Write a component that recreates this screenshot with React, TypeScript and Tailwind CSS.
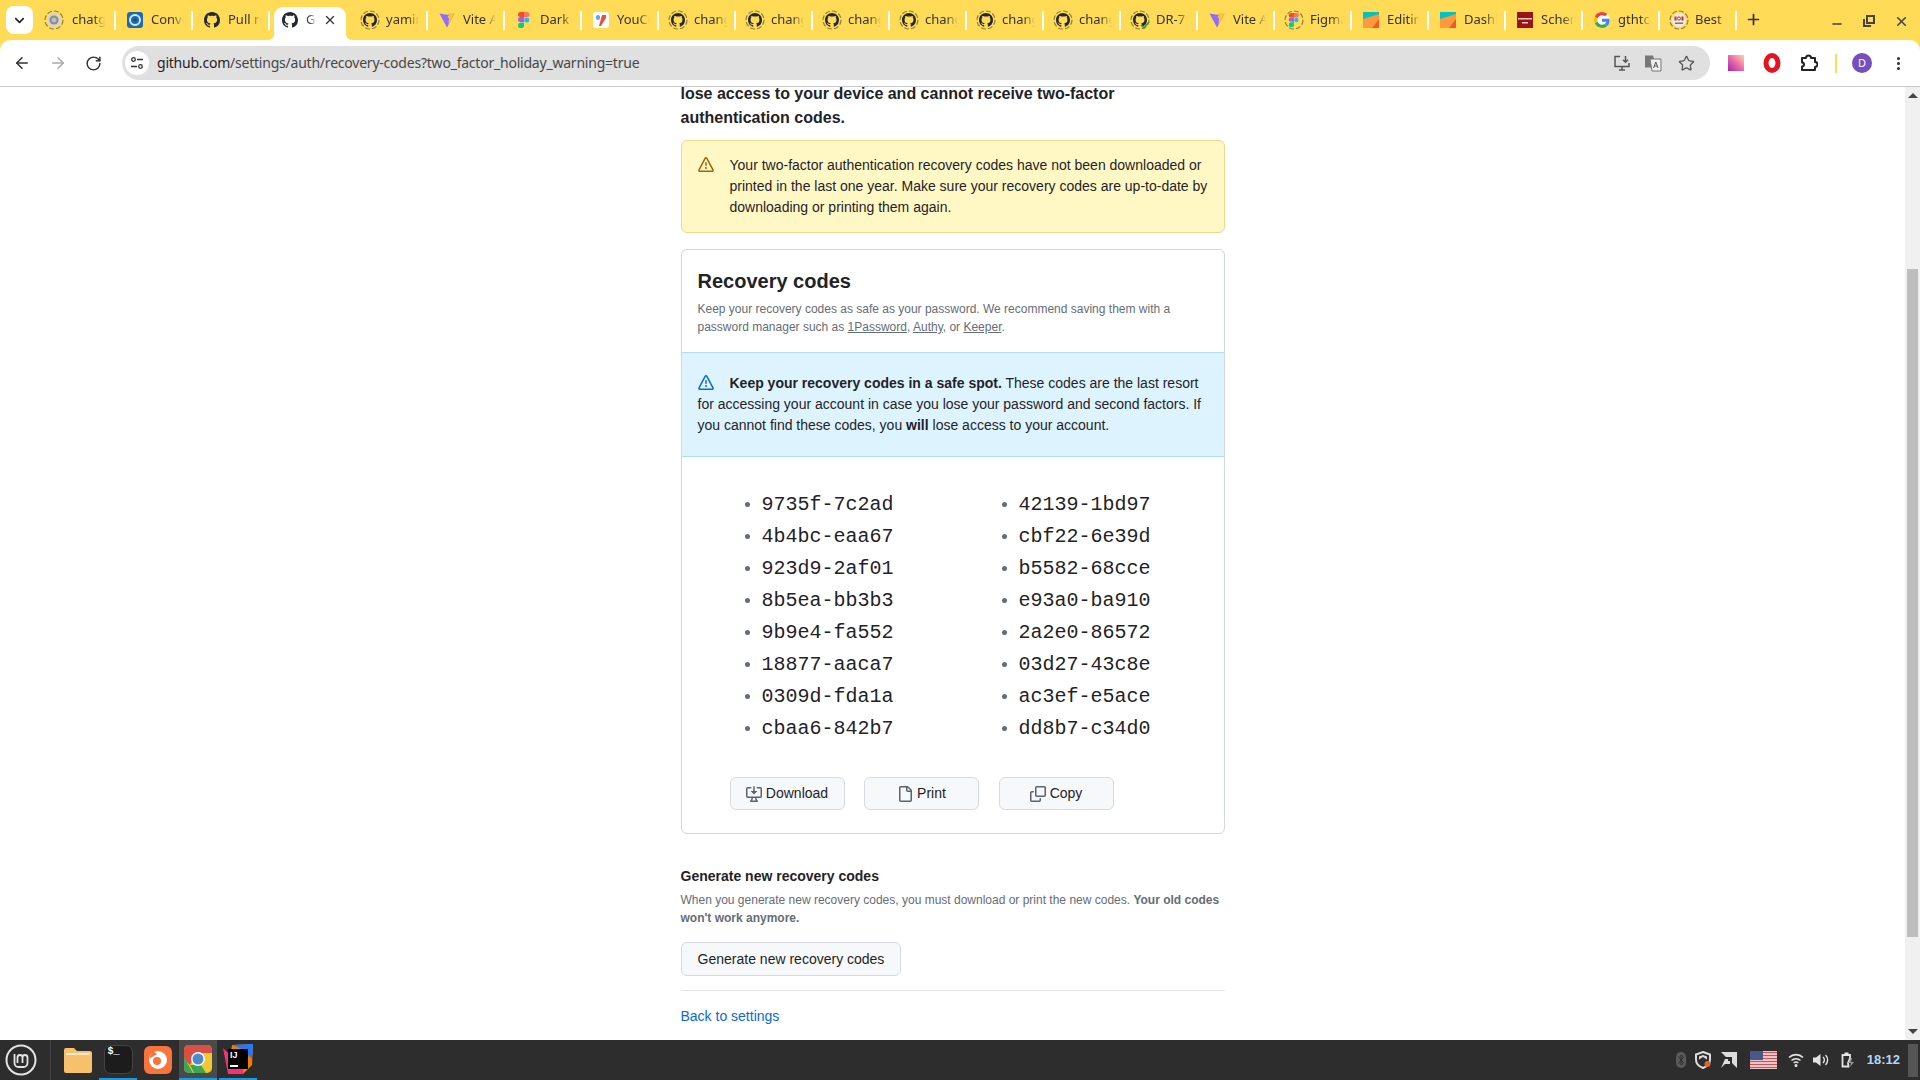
import React from 'react';
import { ArrowLeft, ArrowRight, RotateCw, Star, Plus, X, Minus, EllipsisVertical, ChevronDown } from 'lucide-react';

const ALERT =
  'M6.457 1.047c.659-1.234 2.427-1.234 3.086 0l6.082 11.378A1.75 1.75 0 0 1 14.082 15H1.918a1.75 1.75 0 0 1-1.543-2.575Zm1.763.707a.25.25 0 0 0-.44 0L1.698 13.132a.25.25 0 0 0 .22.368h12.164a.25.25 0 0 0 .22-.368Zm.53 3.996v2.5a.75.75 0 0 1-1.5 0v-2.5a.75.75 0 0 1 1.5 0ZM9 11a1 1 0 1 1-2 0 1 1 0 0 1 2 0Z';
const OCTOCAT =
  'M8 0c4.42 0 8 3.58 8 8a8.013 8.013 0 0 1-5.45 7.59c-.4.08-.55-.17-.55-.38 0-.27.01-1.13.01-2.2 0-.75-.25-1.23-.54-1.48 1.78-.2 3.65-.88 3.65-3.95 0-.88-.31-1.59-.82-2.15.08-.2.36-1.02-.08-2.12 0 0-.67-.22-2.2.82-.64-.18-1.32-.27-2-.27-.68 0-1.36.09-2 .27-1.53-1.03-2.2-.82-2.2-.82-.44 1.1-.16 1.92-.08 2.12-.51.56-.82 1.28-.82 2.15 0 3.06 1.86 3.75 3.64 3.95-.23.2-.44.55-.51 1.07-.46.21-1.61.55-2.33-.66-.15-.24-.6-.83-1.23-.82-.67.01-.27.38.01.53.34.19.73.9.82 1.13.16.45.68 1.31 2.69.94 0 .67.01 1.3.01 1.49 0 .21-.15.45-.55.38A7.995 7.995 0 0 1 0 8c0-4.42 3.58-8 8-8Z';

const Octo = ({ size = 16 }: { size?: number }) => (
  <svg width={size} height={size} viewBox="0 0 16 16" fill="#24292f">
    <path d={OCTOCAT} />
  </svg>
);

const Ring = ({ children }: { children: React.ReactNode }) => (
  <span className="relative flex h-[20px] w-[20px] items-center justify-center">
    <svg className="absolute inset-0" width="20" height="20" viewBox="0 0 20 20" fill="none">
      <circle cx="10" cy="10" r="9" stroke="#8f7f3e" strokeWidth="1.2" strokeDasharray="5 2" />
    </svg>
    {children}
  </span>
);

const Vite = () => (
  <svg width="16" height="16" viewBox="0 0 16 16">
    <path d="M0.5 1.5 L8 2.8 L15.5 1.5 L8 15.5 Z" fill="#8f6bff" />
    <path d="M10.5 0.8 L15.5 1.5 L9.5 12.5 L10 6 L8.5 6 Z" fill="#ffc62a" />
  </svg>
);

const Figma = ({ size = 16 }: { size?: number }) => (
  <svg width={size} height={size} viewBox="0 0 12 16">
    <path d="M2.5 0H6v5H2.500a2.500 2.500 0 0 1 0-5Z" fill="#f24e1e" />
    <path d="M6 0h3a2.500 2.500 0 0 1 0 5H6Z" fill="#ff7262" />
    <path d="M2.500 5H6v5H2.500a2.500 2.500 0 0 1 0-5Z" fill="#a259ff" />
    <circle cx="8.700" cy="8" r="2.500" fill="#1abcfe" />
    <path d="M2.500 10.500H6V13a3 3 0 1 1-3.500-2.500Z" fill="#0acf83" />
  </svg>
);

const Sheet = () => (
  <svg width="16" height="16" viewBox="0 0 16 16">
    <rect width="16" height="16" fill="#00c4c4" />
    <path d="M0 7 L16 2 V16 H0 Z" fill="#ff9a3c" />
    <path d="M9 16 L16 7 V16 Z" fill="#f0592a" />
  </svg>
);

const Conv = () => (
  <svg width="16" height="16" viewBox="0 0 16 16">
    <rect width="16" height="16" rx="3" fill="#1c6bb0" />
    <circle cx="8" cy="8" r="5" fill="none" stroke="#d5e8f6" strokeWidth="2" />
    <circle cx="8" cy="8" r="1.500" fill="#1c4f80" />
  </svg>
);

const You = () => (
  <svg width="16" height="16" viewBox="0 0 16 16">
    <rect width="16" height="16" rx="3" fill="#fff" />
    <rect x="3" y="3" width="4" height="5" rx="2" fill="#5aa7e8" />
    <path d="M9 3h4v3l-5 8H6Z" fill="#e9513f" />
  </svg>
);

const Chat = () => (
  <svg width="14" height="14" viewBox="0 0 14 14">
    <circle cx="7" cy="7" r="7" fill="#d4d4d4" />
    <circle cx="7" cy="7" r="4.500" fill="#8b8b8b" />
    <circle cx="7" cy="7" r="2.500" fill="#bdbdbd" />
  </svg>
);

const Schema = () => (
  <svg width="16" height="16" viewBox="0 0 16 16">
    <rect width="16" height="16" fill="#9c1313" />
    <rect x="1" y="6" width="14" height="1.500" fill="#e9c9c9" />
    <rect x="5" y="10" width="6" height="1.500" fill="#e9c9c9" />
  </svg>
);

const Google = () => (
  <svg width="16" height="16" viewBox="0 0 48 48">
    <circle cx="24" cy="24" r="24" fill="#fff" />
    <path fill="#EA4335" d="M24 9.500c3.500 0 6.700 1.200 9.200 3.600l6.900-6.900C35.900 2.400 30.500 0 24 0 14.600 0 6.500 5.400 2.600 13.200l8 6.200C12.400 13.700 17.700 9.500 24 9.500z" />
    <path fill="#4285F4" d="M47 24.500c0-1.600-.1-3.100-.4-4.500H24v9h13c-.6 3-2.200 5.500-4.800 7.200l7.700 6c4.500-4.200 7.100-10.300 7.100-17.700z" />
    <path fill="#FBBC05" d="M10.500 28.600a14.500 14.500 0 0 1 0-9.200l-8-6.200a24 24 0 0 0 0 21.600z" />
    <path fill="#34A853" d="M24 48c6.500 0 11.900-2.100 15.900-5.800l-7.700-6c-2.200 1.500-4.900 2.300-8.200 2.300-6.300 0-11.600-4.200-13.500-9.900l-8 6.200C6.500 42.600 14.600 48 24 48z" />
  </svg>
);

const Best = () => (
  <svg width="14" height="14" viewBox="0 0 14 14">
    <circle cx="7" cy="7" r="7" fill="#efe9e2" />
    <rect x="2.500" y="3.500" width="2" height="4" fill="#b5342c" />
    <circle cx="7" cy="5.500" r="1.600" fill="none" stroke="#b5342c" />
    <rect x="9.500" y="3.500" width="2" height="4" fill="#b5342c" />
    <rect x="3" y="9.500" width="8" height="1.500" fill="#777" />
  </svg>
);

const Ok = () => (
  <span className="relative flex">
    <Octo size={14} />
    <svg className="absolute -right-[3px] -bottom-[2px]" width="10" height="8" viewBox="0 0 10 8" fill="none">
      <path d="M1 4l3 3 5-6" stroke="#3f9b3f" strokeWidth="1.500" />
    </svg>
  </span>
);

const tabs: { icon: React.ReactNode; label: string; active?: boolean; first?: boolean }[] = [
  { icon: <Ring><Chat /></Ring>, label: 'chatgpt', first: true },
  { icon: <Conv />, label: 'Conversation' },
  { icon: <Octo />, label: 'Pull request' },
  { icon: <Octo />, label: 'GitHub', active: true },
  { icon: <Ring><Octo size={14} /></Ring>, label: 'yamini' },
  { icon: <Vite />, label: 'Vite App' },
  { icon: <Figma />, label: 'Dark Mode' },
  { icon: <You />, label: 'YouCode' },
  { icon: <Ring><Octo size={14} /></Ring>, label: 'changes' },
  { icon: <Ring><Octo size={14} /></Ring>, label: 'changes' },
  { icon: <Ring><Octo size={14} /></Ring>, label: 'changes' },
  { icon: <Ring><Octo size={14} /></Ring>, label: 'changes' },
  { icon: <Ring><Octo size={14} /></Ring>, label: 'changes' },
  { icon: <Ring><Octo size={14} /></Ring>, label: 'changes' },
  { icon: <Ring><Ok /></Ring>, label: 'DR-7' },
  { icon: <Vite />, label: 'Vite App' },
  { icon: <Ring><Figma size={14} /></Ring>, label: 'Figma' },
  { icon: <Sheet />, label: 'Editing' },
  { icon: <Sheet />, label: 'Dashboard' },
  { icon: <Schema />, label: 'Schema' },
  { icon: <Google />, label: 'gthtcp' },
  { icon: <Ring><Best /></Ring>, label: 'Best' },
];

const Tab = ({ icon, label, active, first }: { icon: React.ReactNode; label: string; active?: boolean; first?: boolean }) => {
  if (active) {
    return (
      <div className="relative mt-[7px] mr-[6px] ml-[3px] flex h-[33px] w-[72px] shrink-0 items-center rounded-t-[9px] bg-white pb-[7px] pl-[8px]">
        <span className="absolute -left-[7px] bottom-0 h-[7px] w-[7px] bg-[radial-gradient(circle_at_0_0,transparent_7px,white_7.5px)]" />
        <span className="absolute -right-[7px] bottom-0 h-[7px] w-[7px] bg-[radial-gradient(circle_at_100%_0,transparent_7px,white_7.5px)]" />
        {icon}
        <span className="ml-[8px] w-[10px] overflow-hidden whitespace-nowrap text-[13px] text-[#444] [mask-image:linear-gradient(to_right,black_40%,transparent)]">{label}</span>
        <X size={14} strokeWidth={2.2} className="ml-[7px] text-[#333]" />
      </div>
    );
  }
  if (first) {
    return (
      <div className="flex h-[40px] w-[79px] shrink-0 items-center pr-[1px]">
        <span className="flex w-[30px] shrink-0 items-center justify-center pl-[1px]">{icon}</span>
        <span className="ml-[4px] w-[33px] overflow-hidden whitespace-nowrap text-[13px] text-[#333] [mask-image:linear-gradient(to_right,black_65%,transparent)]">{label}</span>
        <span className="ml-auto h-[19px] w-[2px] bg-white" />
      </div>
    );
  }
  return (
    <div className="flex h-[40px] w-[77px] shrink-0 items-center pr-[1px]">
      <span className="flex w-[34px] shrink-0 items-center justify-center pl-[1px]">{icon}</span>
      <span className="w-[33px] overflow-hidden whitespace-nowrap text-[13px] text-[#333] [mask-image:linear-gradient(to_right,black_65%,transparent)]">{label}</span>
      <span className="ml-auto h-[19px] w-[2px] bg-white" />
    </div>
  );
};

const TabBar = () => (
  <div className="flex h-[40px] shrink-0 items-start bg-[#ffdb58] font-['Noto_Sans',sans-serif]">
    <div className="mt-[6px] ml-[6px] mr-[5px] flex h-[28px] w-[27px] shrink-0 items-center justify-center rounded-[8px] bg-white">
      <ChevronDown size={15} strokeWidth={2.6} className="text-[#222]" />
    </div>
    {tabs.map((t, i) => (
      <Tab key={i} icon={t.icon} label={t.label} active={t.active} first={t.first} />
    ))}
    <Plus size={17} strokeWidth={2.4} className="mt-[11px] ml-[7px] text-[#333]" />
    <div className="ml-auto mr-[11px] mt-[11px] flex items-center gap-[19px] text-[#444]">
      <Minus size={14} strokeWidth={2.6} className="mt-[6px]" />
      <svg width="12" height="12" viewBox="0 0 12 12" fill="none" stroke="#444" strokeWidth="2">
        <rect x="4" y="1" width="7" height="7" />
        <path d="M1 4v7h7" />
      </svg>
      <X size={15} strokeWidth={2.6} />
    </div>
  </div>
);

const Toolbar = () => (
  <div className="flex h-[47px] shrink-0 bg-[#ffdb58]">
    <div className="flex w-full items-start rounded-t-[10px] border-b border-[#c8c8c8] bg-white pt-[6px] font-['Noto_Sans',sans-serif]">
      <div className="flex h-[34px] w-[122px] shrink-0 items-center pl-[13px] gap-[18px]">
        <ArrowLeft size={18} strokeWidth={2.1} className="text-[#333]" />
        <ArrowRight size={18} strokeWidth={2.1} className="text-[#aaa]" />
        <RotateCw size={17} strokeWidth={2.1} className="text-[#333]" />
      </div>
      <div className="flex h-[34px] w-[1588px] shrink-0 items-center rounded-full bg-[#e0e0e0] pl-[3px] pr-[15px]">
        <span className="flex h-[24px] w-[24px] items-center justify-center rounded-full bg-white">
          <svg width="14" height="14" viewBox="0 0 14 14" fill="none" stroke="#333" strokeWidth="1.300">
            <circle cx="3.500" cy="3.500" r="1.800" />
            <path d="M7 3.500h6M1 10.500h6" />
            <circle cx="10.500" cy="10.500" r="1.800" />
          </svg>
        </span>
        <span className="ml-[8px] -mt-[2px] whitespace-nowrap text-[14px] tracking-[-0.22px] text-[#474747]">
          <span className="text-[#1f1f1f]">github.com</span>/settings/auth/recovery-codes?two_factor_holiday_warning=true
        </span>
        <svg className="ml-auto" width="18" height="18" viewBox="0 0 18 18" fill="none" stroke="#555" strokeWidth="1.500">
          <path d="M7 2.500H2v10h14V9M6 16h6M9 13v3M12.500 2v6M10 5.800l2.500 2.500L15 5.800" />
        </svg>
        <svg className="ml-[13px]" width="18" height="18" viewBox="0 0 18 18">
          <path d="M1 1.500h8l1 3v9H1Z" fill="#777" />
          <path d="M6 5h11v12H8Z" fill="#f0f0f0" stroke="#777" />
          <path d="M9.500 14l2.300-6 2.200 6M10.300 12h3" stroke="#555" fill="none" />
        </svg>
        <Star size={17} strokeWidth={1.8} className="ml-[16px] text-[#555]" />
      </div>
      <div className="flex h-[34px] flex-1 items-center">
        <span className="ml-[18px] h-[16px] w-[16px] bg-gradient-to-tr from-[#a21caf] via-[#ec6aa8] to-[#ffd0b0]" />
        <svg className="ml-[19px]" width="18" height="20" viewBox="0 0 18 20">
          <ellipse cx="9" cy="10" rx="6" ry="7.500" fill="none" stroke="#e8121f" strokeWidth="5" />
        </svg>
        <svg className="ml-[19px]" width="18" height="18" viewBox="0 0 18 18" fill="none" stroke="#222" strokeWidth="2" strokeLinejoin="round">
          <path d="M2 4h4a2.500 2.500 0 0 1 5 0h4v4a2.500 2.500 0 0 1 0 5v3H2v-3.500a2 2 0 0 0 2-2 2 2 0 0 0-2-2Z" />
        </svg>
        <span className="ml-[17px] h-[19px] w-[2px] bg-[#ffdb58]" />
        <span className="ml-[15px] flex h-[20px] w-[20px] items-center justify-center rounded-full bg-[#7350bd] text-[11px] text-white">D</span>
        <EllipsisVertical size={17} strokeWidth={2.4} className="ml-[18px] text-[#333]" />
      </div>
    </div>
  </div>
);

const Scrollbar = () => (
  <div className="flex w-[15px] shrink-0 flex-col items-center bg-[#f0f0f0]">
    <span className="mt-[6px] h-0 w-0 border-x-[5px] border-b-[5px] border-x-transparent border-b-[#444]" />
    <span className="mt-[171px] h-[668px] w-[11px] bg-[#bebebe]" />
    <span className="mt-auto mb-[6px] h-0 w-0 border-x-[5px] border-t-[5px] border-x-transparent border-t-[#444]" />
  </div>
);

const leftCodes = ['9735f-7c2ad', '4b4bc-eaa67', '923d9-2af01', '8b5ea-bb3b3', '9b9e4-fa552', '18877-aaca7', '0309d-fda1a', 'cbaa6-842b7'];
const rightCodes = ['42139-1bd97', 'cbf22-6e39d', 'b5582-68cce', 'e93a0-ba910', '2a2e0-86572', '03d27-43c8e', 'ac3ef-e5ace', 'dd8b7-c34d0'];

const CodeList = ({ codes }: { codes: string[] }) => (
  <ul className="list-disc pl-[80px] marker:text-[18px] marker:text-[#656d76]">
    {codes.map((c) => (
      <li key={c} className="h-[32px] font-['Liberation_Mono',monospace] text-[20px] leading-[32px] text-[#1f2328]">
        {c}
      </li>
    ))}
  </ul>
);

const ActionButton = ({ label, children }: { label: string; children: React.ReactNode }) => (
  <button className="flex h-[33px] w-[115px] items-center justify-center gap-[4px] rounded-[6px] border border-[#d5dbe1] bg-[#f6f8fa] text-[14px] text-[#1f2328]">
    <svg width="16" height="16" viewBox="0 0 16 16" fill="#59636e">
      {children}
    </svg>
    {label}
  </button>
);

const RecoveryPage = () => (
  <div className="mx-auto -mt-[5px] w-[544px] font-['Liberation_Sans',sans-serif] text-[#1f2328]">
    <p className="text-[16px] font-bold leading-[24px]">
      lose access to your device and cannot receive two-factor
      <br />
      authentication codes.
    </p>
    <div className="mt-[10px] flex h-[93px] items-start gap-[16px] rounded-[6px] border border-[#ecd98f] bg-[#fff8c5] px-[16px] pt-[14px] text-[14px] leading-[21px]">
      <svg className="mt-[2px] shrink-0" width="16" height="16" viewBox="0 0 16 16" fill="#9a6700">
        <path d={ALERT} />
      </svg>
      <p>
        Your two-factor authentication recovery codes have not been downloaded or printed in the last one year. Make sure your recovery codes are up-to-date by downloading or printing them again.
      </p>
    </div>

    <section className="mt-[16px] h-[585px] overflow-hidden rounded-[6px] border border-[#d0d7de]">
      <div className="h-[102px] px-[16px] pt-[19px]">
        <h2 className="text-[20px] font-semibold leading-[24px]">Recovery codes</h2>
        <p className="mt-[7px] text-[12px] leading-[18px] text-[#656d76]">
          Keep your recovery codes as safe as your password. We recommend saving them with a password manager such as <u>1Password</u>, <u>Authy</u>, or <u>Keeper</u>.
        </p>
      </div>
      <div className="h-[105px] border-y border-[#b0dcff] bg-[#ddf4ff] px-[16px] pt-[20px] text-[14px] leading-[21px]">
        <svg className="mr-[16px] inline-block align-[-3px]" width="16" height="16" viewBox="0 0 16 16" fill="#0969da">
          <path d={ALERT} />
        </svg>
        <strong>Keep your recovery codes in a safe spot.</strong> These codes are the last resort for accessing your account in case you lose your password and second factors. If you cannot find these codes, you <strong>will</strong> lose access to your account.
      </div>
      <div className="grid grid-cols-[257px_257px] pt-[32px]">
        <CodeList codes={leftCodes} />
        <CodeList codes={rightCodes} />
      </div>
      <div className="mt-[32px] flex gap-[19.5px] pl-[48px]">
        <ActionButton label="Download">
          <path d="m4.927 5.427 2.896 2.896a.25.25 0 0 0 .354 0l2.896-2.896A.25.25 0 0 0 10.896 5H8.750V.75a.75.75 0 1 0-1.500 0V5H5.104a.25.25 0 0 0-.177.427Z" />
          <path d="M1.573 2.573a.25.25 0 0 0-.073.177v7.500a.25.25 0 0 0 .25.25h12.500a.25.25 0 0 0 .25-.25v-7.500a.25.25 0 0 0-.25-.25h-3a.75.75 0 1 1 0-1.500h3A1.750 1.750 0 0 1 16 2.750v7.500A1.750 1.750 0 0 1 14.250 12h-3.727c.099 1.041.52 1.872 1.292 2.757A.75.75 0 0 1 11.250 16h-6.500a.75.75 0 0 1-.565-1.243c.772-.885 1.193-1.716 1.292-2.757H1.750A1.750 1.750 0 0 1 0 10.250v-7.500A1.750 1.750 0 0 1 1.750 1h3a.75.75 0 0 1 0 1.500h-3a.25.25 0 0 0-.177.073ZM6.982 12a5.720 5.720 0 0 1-.765 2.500h3.566a5.720 5.720 0 0 1-.765-2.500H6.982Z" />
        </ActionButton>
        <ActionButton label="Print">
          <path d="M2 1.750C2 .784 2.784 0 3.750 0h6.586c.464 0 .909.184 1.237.513l2.914 2.914c.329.328.513.773.513 1.237v9.586A1.750 1.750 0 0 1 13.250 16h-9.500A1.750 1.750 0 0 1 2 14.250Zm1.750-.25a.25.25 0 0 0-.25.25v12.500c0 .138.112.25.25.25h9.500a.25.25 0 0 0 .25-.25V6h-2.750A1.750 1.750 0 0 1 9 4.250V1.500Zm6.750.062V4.250c0 .138.112.25.25.25h2.688l-.011-.013-2.914-2.914-.013-.011Z" />
        </ActionButton>
        <ActionButton label="Copy">
          <path d="M0 6.750C0 5.784.784 5 1.750 5h1.500a.75.75 0 0 1 0 1.500h-1.500a.25.25 0 0 0-.25.25v7.500c0 .138.112.25.25.25h7.500a.25.25 0 0 0 .25-.25v-1.500a.75.75 0 0 1 1.500 0v1.500A1.750 1.750 0 0 1 9.250 16h-7.500A1.750 1.750 0 0 1 0 14.250Z" />
          <path d="M5 1.750C5 .784 5.784 0 6.750 0h7.500C15.216 0 16 .784 16 1.750v7.500A1.750 1.750 0 0 1 14.250 11h-7.500A1.750 1.750 0 0 1 5 9.250Zm1.750-.25a.25.25 0 0 0-.25.25v7.500c0 .138.112.25.25.25h7.500a.25.25 0 0 0 .25-.25v-7.500a.25.25 0 0 0-.25-.25Z" />
        </ActionButton>
      </div>
    </section>

    <h3 className="mt-[32px] text-[14px] font-bold leading-[21px]">Generate new recovery codes</h3>
    <p className="mt-[4px] text-[12px] leading-[18px] text-[#656d76]">
      When you generate new recovery codes, you must download or print the new codes. <strong>Your old codes won't work anymore.</strong>
    </p>
    <button className="mt-[15px] flex h-[34px] w-[220px] items-center justify-center rounded-[6px] border border-[#d5dbe1] bg-[#f6f8fa] pl-[1px] text-[14px] text-[#1f2328]">
      Generate new recovery codes
    </button>
    <div className="mt-[14px] border-t border-[#e3e6ea] pt-[15px] text-[14px] leading-[21px]">
      <a className="text-[#0969da]">Back to settings</a>
    </div>
  </div>
);

const Taskbar = () => (
  <div className="flex h-[40px] shrink-0 items-stretch bg-[#2d2d2d]">
    <div className="flex w-[51px] shrink-0 items-center justify-center border-r border-[#454545] pr-[9px]">
      <svg width="32" height="32" viewBox="0 0 32 32" fill="none" stroke="#e4e4e4">
        <circle cx="16" cy="16" r="14.500" strokeWidth="2" />
        <path d="M9.500 10v9a4 4 0 0 0 4 4h5a4 4 0 0 0 4-4v-5.500a2.500 2.500 0 0 0-5 0V19M12.500 19v-5.500a2.500 2.500 0 0 1 5 0" strokeWidth="1.800" />
      </svg>
    </div>
    <div className="ml-[8px] flex items-stretch gap-[2px]">
      <div className="flex w-[38px] items-center justify-center">
        <svg width="30" height="26" viewBox="0 0 30 26">
          <path d="M1 3a2 2 0 0 1 2-2h8l3 3h13a2 2 0 0 1 2 2v18a2 2 0 0 1-2 2H3a2 2 0 0 1-2-2Z" fill="#f7c06d" />
          <rect x="3" y="6" width="24" height="2" fill="#f4e8d0" />
        </svg>
      </div>
      <div className="flex w-[38px] items-center justify-center border-b-[2px] border-[#1a9ae0]">
        <span className="flex h-[29px] w-[29px] items-start rounded-[7px] border border-[#444] bg-[#1c1c1c] pl-[3px] font-['Liberation_Mono',monospace] text-[10px] font-bold leading-[12px] text-white">$_</span>
      </div>
      <div className="flex w-[38px] items-center justify-center">
        <span className="flex h-[28px] w-[28px] items-center justify-center rounded-[6px] bg-[#f9733a]">
          <svg width="20" height="20" viewBox="0 0 20 20">
            <circle cx="10" cy="10" r="9" fill="#fff" />
            <circle cx="9" cy="11" r="4" fill="#f9733a" />
            <path d="M1 9 L9 4 L5 1 Z" fill="#f9733a" />
          </svg>
        </span>
      </div>
      <div className="flex w-[38px] items-center justify-center border-b-[2px] border-[#1a9ae0] bg-[#4a4a4a]">
        <svg width="28" height="28" viewBox="0 0 28 28">
          <rect width="28" height="28" rx="5" fill="#f2c832" />
          <path d="M0 5a5 5 0 0 1 5-5h18a5 5 0 0 1 5 5v3H13L6 20 0 14Z" fill="#d94f43" />
          <path d="M0 12l9 16h-4a5 5 0 0 1-5-5Z M6 20l4 8h12L17 20Z" fill="#3aa757" />
          <circle cx="14" cy="14" r="7" fill="#fff" />
          <circle cx="14" cy="14" r="5.500" fill="#4a8bc9" />
        </svg>
      </div>
      <div className="flex w-[38px] items-center justify-center border-b-[2px] border-[#1a9ae0]">
        <span className="relative flex h-[32px] w-[32px] items-center justify-center">
          <svg className="absolute inset-0" width="32" height="32" viewBox="0 0 32 32">
            <path d="M10 2 L31 1 L30 22 L22 30 L6 30 Z" fill="#f57c00" />
            <path d="M10 2 L31 1 L30 16 L20 6 Z" fill="#1e7bff" />
            <path d="M1 5 L20 24 L22 31 L6 31 Z" fill="#ff2d78" />
          </svg>
          <span className="relative flex h-[20px] w-[20px] flex-col justify-between bg-black px-[2px] py-[1px] font-['Liberation_Sans',sans-serif] text-[9px] font-bold leading-[10px] text-white">
            IJ
            <span className="mb-[1px] h-[2px] w-[8px] bg-white" />
          </span>
        </span>
      </div>
    </div>
    <div className="ml-auto flex items-center pr-[2px]">
      <svg width="10" height="16" viewBox="0 0 10 16">
        <rect width="10" height="16" rx="5" fill="#5a5a5a" />
        <path d="M2.500 4.500 7.500 11 5 13V3l2.500 2L2.500 11.500" stroke="#2d2d2d" fill="none" />
      </svg>
      <svg className="ml-[8px]" width="18" height="18" viewBox="0 0 18 18">
        <path d="M9 1l7 2.500v5c0 4-3 7-7 8.500-4-1.500-7-4.500-7-8.500v-5Z" fill="none" stroke="#ddd" strokeWidth="2" />
        <path d="M9 4l4 1.500v3L9 6 5 8.500v-3Z" fill="#ddd" />
        <circle cx="13.500" cy="13" r="3" fill="#e2662a" />
      </svg>
      <svg className="ml-[9px]" width="16" height="16" viewBox="0 0 16 16" fill="#ddd">
        <path d="M0 0h16v16l-5-5V5H5ZM4 7h3v2h2v3H4l-4 4Z" />
      </svg>
      <svg className="ml-[13px]" width="27" height="18" viewBox="0 0 27 18">
        <rect width="27" height="18" fill="#f3eded" />
        <path d="M0 1.500h27M0 4.500h27M0 7.500h27M0 10.500h27M0 13.500h27M0 16.500h27" stroke="#c6525a" strokeWidth="1.500" />
        <rect width="13" height="9" fill="#4b568a" />
      </svg>
      <svg className="ml-[11px]" width="16" height="14" viewBox="0 0 16 14" fill="none" stroke="#e4e4e4" strokeWidth="1.600">
        <path d="M1 4.500a10 10 0 0 1 14 0M3.500 7.500a6.500 6.500 0 0 1 9 0M5.800 10a3 3 0 0 1 4.400 0" />
        <circle cx="8" cy="12.500" r="0.700" fill="#e4e4e4" />
      </svg>
      <svg className="ml-[9px]" width="16" height="14" viewBox="0 0 16 14" fill="none">
        <path d="M0 4.500h3L7.500 1v12L3 9.500H0Z" fill="#e4e4e4" />
        <path d="M10 4a4 4 0 0 1 0 6M12.500 2a7 7 0 0 1 0 10" stroke="#e4e4e4" strokeWidth="1.400" />
      </svg>
      <svg className="ml-[12px]" width="14" height="16" viewBox="0 0 14 16" fill="none">
        <path d="M1.500 3h7.500v3l-2 5 .5 3.500H1.500Z" stroke="#e4e4e4" strokeWidth="1.800" />
        <rect x="3.500" y="0.500" width="4" height="2" fill="#e4e4e4" />
        <path d="M10 6l-3 5h3l-1 4 4-5h-3l1-4Z" fill="#999" />
      </svg>
      <span className="ml-[12px] font-['Liberation_Sans',sans-serif] text-[13px] font-bold text-[#b5d6f2]">18:12</span>
      <span className="ml-[8px] h-[33px] w-[10px] bg-[#555]" />
    </div>
  </div>
);

export default function App() {
  return (
    <div className="flex h-screen w-full flex-col overflow-hidden bg-white">
      <TabBar />
      <Toolbar />
      <main className="flex min-h-0 flex-1 overflow-hidden">
        <div className="min-w-0 flex-1 overflow-hidden">
          <RecoveryPage />
        </div>
        <Scrollbar />
      </main>
      <Taskbar />
    </div>
  );
}
